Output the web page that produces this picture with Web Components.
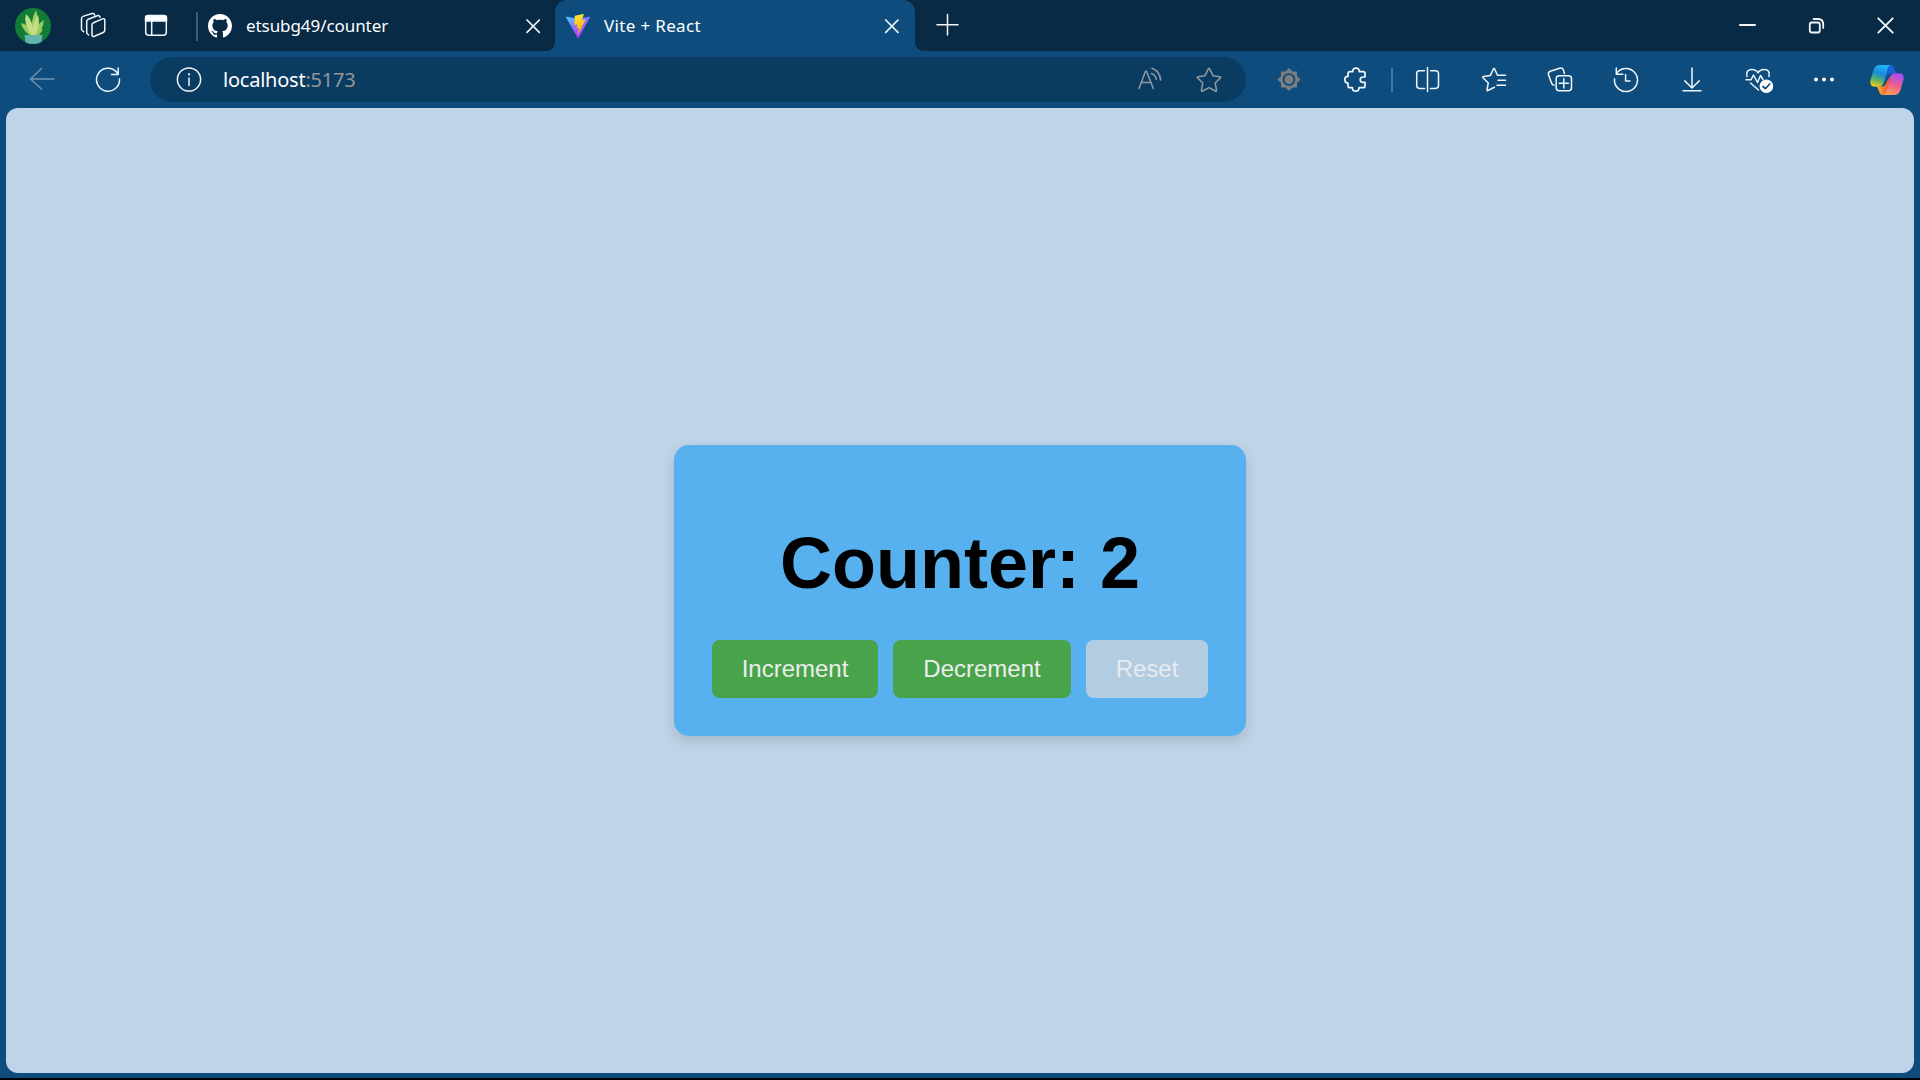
<!DOCTYPE html>
<html lang="en">
<head>
<meta charset="utf-8">
<title>Vite + React</title>
<style>
html,body{margin:0;height:100%;background:#000;overflow:hidden}
</style>
</head>
<body>
<browser-window></browser-window>
<script>
// Glyphs share one window-wide coordinate space; each svg shows its own slice of it.
const GLYPHS = {
  avatar: `<defs><clipPath id="c"><circle cx="33" cy="26" r="18"/></clipPath></defs><g clip-path="url(#c)" stroke="none"><rect x="14" y="7" width="38" height="38" fill="#107c38"/>
    <g fill="#9ccb5b"><path d="M32 36Q30 20 36 10Q40 20 34 36Z"/><path d="M32 36Q23 32 21 23Q29 24 34 36Z"/><path d="M33 36Q34 26 44 20Q43 31 35 36Z"/><path d="M33 36Q36 31 43 29Q40 36 34 37Z"/></g>
    <g fill="#c3dd82"><path d="M32 36Q23 23 26 14Q33 20 34 36Z"/><path d="M33 36Q31 23 38 15Q41 25 35 36Z"/></g>
    <path d="M24.500 35H42.500L41 45H26Z" fill="#62b5ad"/></g>`,
  workspaces: `<path d="M93.500 22.700L102.500 18.900Q104.800 18.200 104.800 20.500V30Q104.800 31.800 103.200 32.500L94.500 36.300Q92 37.200 92 34.700V25Q92 23.300 93.500 22.700ZM88.700 35L87.500 34Q86.700 33.200 86.700 32V21.500Q86.700 19.800 88.200 19.200L97.200 15.800Q99.400 15 100 17.200M83.700 31.700L82.300 30.500Q81.500 29.800 81.500 28.700V18.700Q81.500 17 83 16.400L92 13.500Q94 13 94.700 15"/>`,
  panel: `<rect x="145.700" y="15.700" width="20.600" height="19.600" rx="3"/><path d="M145.500 21V18Q145.500 15.500 148 15.500H164Q166.500 15.500 166.500 18V21Z" fill="#fff"/><path d="M151.700 21V35"/>`,
  github: `<path stroke="none" fill="#fff" transform="translate(208 14) scale(1.5)" d="M8 0C3.580 0 0 3.580 0 8c0 3.540 2.290 6.530 5.470 7.590.4.070.55-.17.55-.38 0-.19-.01-.82-.01-1.490-2.010.37-2.530-.49-2.690-.94-.09-.23-.48-.94-.82-1.130-.28-.15-.68-.52-.01-.53.63-.01 1.080.58 1.230.82.72 1.210 1.870.87 2.330.66.070-.52.28-.87.51-1.070-1.780-.2-3.640-.89-3.640-3.950 0-.87.31-1.590.82-2.150-.08-.2-.36-1.020.080-2.120 0 0 .67-.21 2.200.82.64-.18 1.320-.27 2-.27s1.360.09 2 .27c1.530-1.040 2.200-.82 2.200-.82.44 1.100.16 1.920.080 2.120.51.56.82 1.270.82 2.150 0 3.070-1.870 3.750-3.650 3.950.29.25.54.73.54 1.480 0 1.070-.01 1.930-.01 2.200 0 .21.15.46.55.38A8.010 8.010 0 0 0 16 8c0-4.420-3.580-8-8-8Z"/>`,
  vite: `<defs><linearGradient id="a" x1="0" y1="0" x2=".6" y2="1"><stop stop-color="#41d1ff"/><stop offset=".5" stop-color="#8b70ff"/><stop offset="1" stop-color="#bd34fe"/></linearGradient><linearGradient id="b" x1=".4" y1="0" x2=".6" y2="1"><stop stop-color="#ffea83"/><stop offset=".1" stop-color="#ffdd35"/><stop offset="1" stop-color="#ffa800"/></linearGradient></defs>
    <g stroke="none" transform="translate(566 14) scale(.0938)"><path fill="url(#a)" d="M255.153 37.938L134.897 252.976c-2.483 4.440-8.862 4.466-11.382.048L.875 37.958c-2.746-4.814 1.371-10.646 6.827-9.670l120.385 21.517a6.537 6.537 0 0 0 2.322-.004l117.867-21.483c5.438-.991 9.574 4.796 6.877 9.620Z"/><path fill="url(#b)" d="M185.432.063L96.440 17.501a3.268 3.268 0 0 0-2.634 3.014l-5.474 92.456a3.268 3.268 0 0 0 3.997 3.378l24.777-5.718c2.318-.535 4.413 1.507 3.936 3.838l-7.361 36.047c-.495 2.426 1.782 4.500 4.151 3.780l15.304-4.649c2.372-.72 4.652 1.360 4.150 3.788l-11.698 56.621c-.732 3.542 3.979 5.473 5.943 2.437l1.313-2.028l72.516-144.720c1.215-2.423-.88-5.186-3.540-4.672l-25.505 4.922c-2.396.462-4.435-1.770-3.759-4.114l16.646-57.705c.677-2.350-1.370-4.583-3.769-4.113Z"/></g>`,
  close1: `<path d="M527 20L539.300 32.300M539.300 20L527 32.300" stroke-width="1.700"/>`,
  close2: `<path d="M885.700 20L898 32.300M898 20L885.700 32.300" stroke-width="1.700"/>`,
  plus: `<path d="M947.500 14.500V35M937 24.700H958"/>`,
  minimize: `<path d="M1740 25H1755" stroke-width="2"/>`,
  restore: `<rect x="1809.800" y="22.500" width="10" height="10" rx="2" stroke-width="1.800"/><path d="M1813.500 19H1818Q1823.200 19 1823.200 24.500V28" stroke-width="1.800"/>`,
  exit: `<path d="M1878.300 18.300L1892.700 32.700M1892.700 18.300L1878.300 32.700" stroke-width="1.900"/>`,
  back: `<path d="M54 79H30.500M41.500 68.500L30.500 79L41.500 89" stroke="#6d94b3"/>`,
  refresh: `<path d="M119.500 79A11.500 11.500 0 1 1 116.500 72L118 74M118.200 68V74.500H111.500"/>`,
  info: `<circle cx="189" cy="79.500" r="11.600"/><path d="M189 78V85.500"/><circle cx="189" cy="74.300" r="1.100" fill="#fff" stroke="none"/>`,
  read: `<g stroke="#909a a2"></g><g stroke="#909aa2"><path d="M1139 88.500L1145.500 71.300H1146.500L1153.300 88.500M1141.500 82.500H1151M1152 68.300Q1160 71.500 1160.600 80M1151.500 73.500Q1155.700 75 1156.300 79.500"/></g>`.replace('<g stroke="#909a a2"></g>', ''),
  star: `<path stroke="#909aa2" d="M1208.300 68.900Q1209 67.800 1209.700 68.900L1213 75.700L1220 76.700Q1221.200 77 1220.400 77.900L1215.200 83L1216.500 90.200Q1216.500 91.500 1215.400 91L1209 87.600L1202.600 91Q1201.500 91.500 1201.500 90.200L1202.800 83L1197.600 77.900Q1196.800 77 1198 76.700L1205 75.700Z"/>`,
  sun: `<g fill="#7c7d7e" stroke="none"><path d="M1281 71.500h16v16h-16zM1289 68l11.500 11.500L1289 91L1277.500 79.500z"/><circle cx="1289" cy="79.500" r="5.400" stroke="#0d4c7c" stroke-width="1.900"/></g>`,
  puzzle: `<path stroke-width="1.700" d="M1350.500 71.700H1353.200Q1353 68.200 1356.500 68.200Q1360 68.200 1359.800 71.700H1363.500Q1365.500 71.700 1365.500 73.700V77H1363.500Q1360.700 77 1360.700 79.700Q1360.700 82.300 1363.500 82.300H1365.500V85.700Q1365.500 87.700 1363.500 87.700H1359.500Q1359.500 91.200 1356.200 91.200Q1352.900 91.200 1352.900 87.700H1350.500Q1348.500 87.700 1348.500 85.700V83Q1345.300 83 1345.300 79.700Q1345.300 76.400 1348.500 76.400V73.700Q1348.500 71.700 1350.500 71.700Z"/>`,
  split: `<path d="M1424.500 70.800H1419.500Q1416.700 70.800 1416.700 73.600V85.600Q1416.700 88.400 1419.500 88.400H1424.500M1427.500 67.500V91.500M1430.500 70.800H1435.500Q1438.500 70.800 1438.500 73.600V85.600Q1438.500 88.400 1435.500 88.400H1430.500"/>`,
  favourites: `<path d="M1494.500 87.300L1487.800 90.500Q1486.700 91 1487 89.700L1488.300 83L1483 77.700Q1482.300 76.800 1483.500 76.500L1490.300 75.600L1493.400 69Q1494 68 1494.600 69L1497.500 75.300H1505.500M1498 80.300H1505.500M1497 85.300H1505.500"/>`,
  collections: `<rect x="1556.200" y="75.800" width="15.300" height="15" rx="3"/><path d="M1563.800 78.800V88M1559.200 83.300H1568.500M1554 85.200Q1552 85 1551.300 82.500L1548.500 74.800Q1547.800 72.300 1550.200 71.300L1559.800 68.200Q1562.500 67.500 1563.300 69.800L1564.500 73.500"/>`,
  history: `<path d="M1616.500 73.500A11.500 11.500 0 1 1 1614.500 79M1616.300 68V74.200H1622.800M1625.600 74.500V81H1630"/>`,
  download: `<path d="M1692 68V87.500M1684.700 80.700L1692 88L1699.300 80.700M1683 90.700H1701"/>`,
  health: `<path d="M1747 76.500Q1745.500 69.500 1752 69.500Q1756 69.500 1758 72.800Q1760 69.500 1764 69.500Q1770.500 69.500 1769 76.500M1746 79.800H1751L1753.500 75L1757.500 82.500L1760.500 75.500L1763 79.500M1750.500 83L1758.500 90"/><circle cx="1766.400" cy="86.300" r="6.800" fill="#fff" stroke="none"/><path d="M1763 86.500L1765.400 88.700L1769.700 84" stroke="#0d4c7c" stroke-width="1.700"/>`,
  more: `<g fill="#fff" stroke="none"><circle cx="1816" cy="79.500" r="1.900"/><circle cx="1824" cy="79.500" r="1.900"/><circle cx="1832" cy="79.500" r="1.900"/></g>`,
  copilot: `<defs><linearGradient id="l" x1=".6" y1="0" x2=".3" y2="1"><stop stop-color="#27b5f7"/><stop offset=".4" stop-color="#168cd7"/><stop offset=".7" stop-color="#57b367"/><stop offset="1" stop-color="#f2c918"/></linearGradient><linearGradient id="r" x1=".6" y1="0" x2=".3" y2="1"><stop stop-color="#a34cf2"/><stop offset=".5" stop-color="#ed5d91"/><stop offset="1" stop-color="#ffa257"/></linearGradient><linearGradient id="t" x1="0" y1="0" x2="1" y2="1"><stop stop-color="#0b5ed8"/><stop offset="1" stop-color="#2467dc"/></linearGradient><linearGradient id="o"><stop stop-color="#ffb42e"/><stop offset="1" stop-color="#e9473e"/></linearGradient></defs>
    <g stroke="none"><path fill="url(#t)" d="M1882 65H1890Q1893 65 1894 68L1896 73.500H1891Q1887.500 73.500 1886.500 77L1884 83Z"/><path fill="url(#o)" d="M1890 76L1888 91L1885 95H1883Q1880 95 1879.300 92L1877 86.500H1882Q1885 86.500 1886 83Z"/><path fill="url(#l)" d="M1880 65H1891Q1888.500 65.500 1887.500 69L1883.500 83Q1882.500 86.700 1879 86.700H1875Q1869.500 86.700 1870.300 81L1873.500 70Q1875 65 1880 65Z"/><path fill="url(#r)" d="M1894 95H1883Q1885.500 94.500 1886.500 91L1890 77.500Q1891 73.300 1895 73.300H1899Q1904.500 73.300 1903.700 79L1900.500 90Q1899 95 1894 95Z"/></g>`
};

class GlyphIcon extends HTMLElement {
  connectedCallback() {
    const [x, y, w, h] = this.getAttribute('box').split(' ');
    this.attachShadow({mode: 'open'}).innerHTML = `
      <style>:host{display:block;flex:none;width:${w}px;height:${h}px}svg{display:block}</style>
      <svg width="${w}" height="${h}" viewBox="${x} ${y} ${w} ${h}" fill="none" stroke="#f1f6fa" stroke-width="1.500" stroke-linecap="round" stroke-linejoin="round">${GLYPHS[this.getAttribute('name')]}</svg>`;
  }
}
customElements.define('glyph-icon', GlyphIcon);

const define = (name, markup) => customElements.define(name, class extends HTMLElement {
  constructor() {
    super();
    this.attachShadow({mode: 'open'}).innerHTML = markup;
  }
});

define('browser-tab', `
<style>
:host{display:flex;width:360px;height:51px;box-sizing:border-box;align-items:center;position:relative;color:#fff;font:17px/24px "Noto Sans","Open Sans",sans-serif}
:host([active]){background:#0d4c7c;border-radius:12px 12px 0 0}
:host([active])::before,:host([active])::after{content:"";position:absolute;bottom:0;width:9px;height:9px}
:host([active])::before{left:-9px;background:radial-gradient(circle at 0 0,transparent 8.500px,#0d4c7c 9.500px)}
:host([active])::after{right:-9px;background:radial-gradient(circle at 100% 0,transparent 8.500px,#0d4c7c 9.500px)}
.title{flex:1;white-space:nowrap;letter-spacing:var(--track,0)}
</style>
<slot name="icon"></slot><span class="title"><slot></slot></span><slot name="close"></slot>`);

define('tab-strip', `
<style>
:host{display:flex;height:51px;background:#082a45}
i{width:2px;height:29px;margin-top:12px;background:#405c73}
.fill{flex:1}
</style>
<glyph-icon name="avatar" box="0 0 66 51"></glyph-icon>
<glyph-icon name="workspaces" box="66 0 60 51"></glyph-icon>
<glyph-icon name="panel" box="126 0 70 51"></glyph-icon>
<i></i>
<browser-tab style="width:357px;--track:-.07px"><glyph-icon slot="icon" name="github" box="198 0 48 51"></glyph-icon>etsubg49/counter<glyph-icon slot="close" name="close1" box="515 0 40 51"></glyph-icon></browser-tab>
<browser-tab active style="--track:.34px"><glyph-icon slot="icon" name="vite" box="555 0 49 51"></glyph-icon>Vite + React<glyph-icon slot="close" name="close2" box="875 0 40 51"></glyph-icon></browser-tab>
<glyph-icon name="plus" box="924 0 60 51" style="margin-left:9px"></glyph-icon>
<span class="fill"></span>
<glyph-icon name="minimize" box="1713 0 69 51"></glyph-icon>
<glyph-icon name="restore" box="1782 0 69 51"></glyph-icon>
<glyph-icon name="exit" box="1851 0 69 51"></glyph-icon>`);

define('address-bar', `
<style>
:host{display:flex;width:1096px;height:45px;border-radius:23px;background:#0a3b60;font:20px/45px "Noto Sans","Open Sans",sans-serif;color:#fff}
.url{flex:1;white-space:nowrap;letter-spacing:-.23px}
.port{color:#939699}
</style>
<glyph-icon name="info" box="150 57 73 45"></glyph-icon>
<span class="url">localhost<span class="port">:5173</span></span>
<glyph-icon name="read" box="1120 57 60 45"></glyph-icon>
<glyph-icon name="star" box="1180 57 66 45"></glyph-icon>`);

define('browser-toolbar', `
<style>
:host{display:flex;height:45px;padding:6px 0 6px 9px;background:#0d4c7c}
address-bar{margin:0 10px 0 9px}
i{width:2px;height:24px;margin:11px 1px 0 3px;background:#47779d}
</style>
<glyph-icon name="back" box="9 57 66 45"></glyph-icon>
<glyph-icon name="refresh" box="75 57 66 45"></glyph-icon>
<address-bar></address-bar>
<glyph-icon name="sun" box="1256 57 66 45"></glyph-icon>
<glyph-icon name="puzzle" box="1322.500 57 66 45"></glyph-icon>
<i></i>
<glyph-icon name="split" box="1394 57 66 45"></glyph-icon>
<glyph-icon name="favourites" box="1460 57 66 45"></glyph-icon>
<glyph-icon name="collections" box="1526 57 66 45"></glyph-icon>
<glyph-icon name="history" box="1592 57 66 45"></glyph-icon>
<glyph-icon name="download" box="1658 57 66 45"></glyph-icon>
<glyph-icon name="health" box="1724 57 66 45"></glyph-icon>
<glyph-icon name="more" box="1790 57 64 45"></glyph-icon>
<glyph-icon name="copilot" box="1854 57 66 45"></glyph-icon>`);

define('counter-button', `
<style>
:host{display:block}
button{display:block;width:100%;height:58px;margin:0;padding:0;border:0;border-radius:7.500px;background:#48a34a;color:#ededed;font:24px/58px "Liberation Sans",Arial,sans-serif}
:host([muted]) button{background:#b2cde1;color:#e8eaed}
</style>
<button><slot></slot></button>`);

define('counter-card', `
<style>
:host{display:flex;flex-direction:column;box-sizing:border-box;width:572px;height:291px;padding:76px 38px 38px;border-radius:15px;background:#57b1ee;box-shadow:0 5px 12.500px rgba(0,0,0,.13);font-family:"Liberation Sans",Arial,sans-serif}
h1{margin:0;font-size:72px;line-height:84px;text-align:center;color:#000;white-space:nowrap}
.actions{display:flex;gap:15px;margin-top:35px}
</style>
<h1>Counter: 2</h1>
<div class="actions">
<counter-button style="width:166px">Increment</counter-button>
<counter-button style="width:178px">Decrement</counter-button>
<counter-button muted style="width:122px">Reset</counter-button>
</div>`);

define('browser-window', `
<style>
:host{display:flex;flex-direction:column;width:1920px;height:1078px;background:#0d4c7c}
main{flex:1;display:flex;align-items:center;justify-content:center;margin:0 6px 5px;border-radius:12px;background:#bfd4e8}
</style>
<tab-strip></tab-strip>
<browser-toolbar></browser-toolbar>
<main><counter-card></counter-card></main>`);
</script>
</body>
</html>
